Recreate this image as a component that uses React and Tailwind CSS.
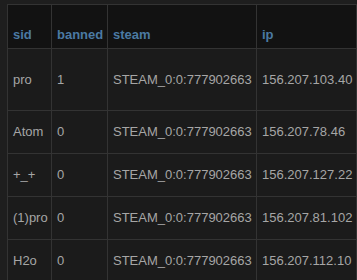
import React from 'react';

const rows = [
    { sid: 'pro', banned: '1', steam: 'STEAM_0:0:777902663', ip: '156.207.103.40', tall: true },
    { sid: 'Atom', banned: '0', steam: 'STEAM_0:0:777902663', ip: '156.207.78.46' },
    { sid: '+_+', banned: '0', steam: 'STEAM_0:0:777902663', ip: '156.207.127.22' },
    { sid: '(1)pro', banned: '0', steam: 'STEAM_0:0:777902663', ip: '156.207.81.102' },
    { sid: 'H2o', banned: '0', steam: 'STEAM_0:0:777902663', ip: '156.207.112.10' },
];

const cols = ['sid', 'banned', 'steam', 'ip'];

const App = () => {
    return (
        <div className="w-[357px] h-[280px] overflow-hidden bg-[#1e1e1e] pt-[4px] pl-[7px] font-['Liberation_Sans',Arial,sans-serif] text-[13px]">
            <table className="table-fixed w-[350px] border-collapse bg-[#1b1b1b]">
                <colgroup>
                    <col className="w-[44px]" />
                    <col className="w-[56px]" />
                    <col className="w-[149px]" />
                    <col className="w-[100px]" />
                </colgroup>
                <thead>
                    <tr className="h-[44px] bg-[#121212]">
                        {cols.map((c) => (
                            <th
                                key={c}
                                className="border border-[#333333] pl-[5px] pr-0 pb-[4px] text-left align-bottom font-bold text-[#4b7aa3] leading-[18px] whitespace-nowrap"
                            >
                                {c}
                            </th>
                        ))}
                    </tr>
                </thead>
                <tbody>
                    {rows.map((r) => (
                        <tr key={r.sid} className={r.tall ? 'h-[62px]' : 'h-[43px]'}>
                            {cols.map((c) => (
                                <td
                                    key={c}
                                    className="border border-[#333333] pl-[5px] pr-0 align-middle text-[#a6a6a6] leading-[18px] whitespace-nowrap"
                                >
                                    {r[c]}
                                </td>
                            ))}
                        </tr>
                    ))}
                </tbody>
            </table>
        </div>
    );
};

export default App;
